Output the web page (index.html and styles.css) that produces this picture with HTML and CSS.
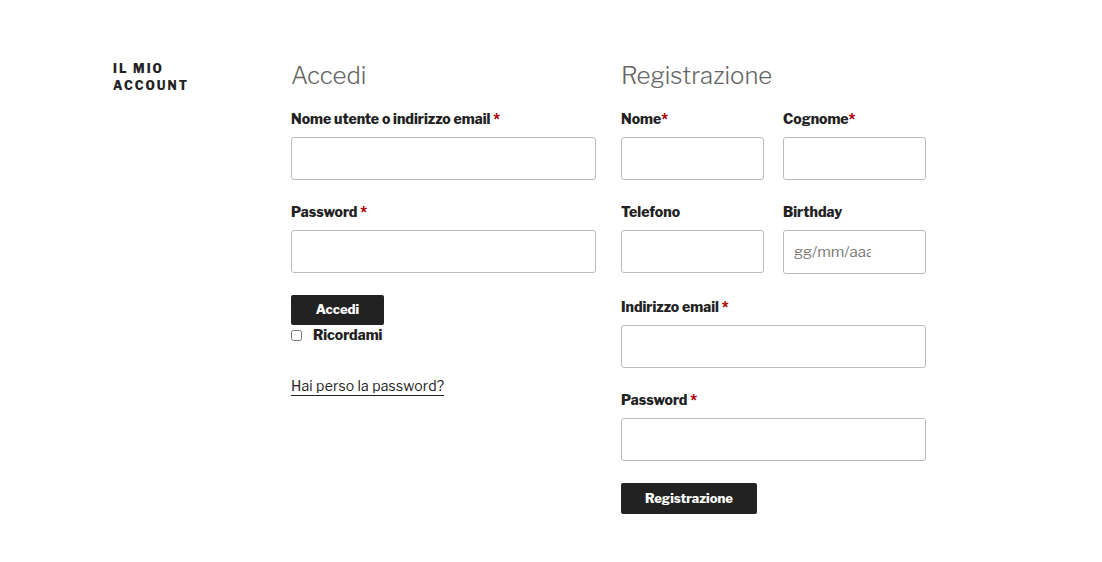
FILE: index.html
```html
<!DOCTYPE html>
<html lang="it">
<head>
<meta charset="utf-8">
<title>Il mio account</title>
<link rel="stylesheet" href="styles.css">
</head>
<body>
<div class="page">
  <header class="page-header">
    <h1 class="page-title">Il mio account</h1>
  </header>
  <div class="columns">
    <section class="col">
      <h2 class="col-title">Accedi</h2>
      <form class="form">
        <div class="row">
          <label>Nome utente o indirizzo email <span class="req">*</span></label>
          <input type="text" class="field">
        </div>
        <div class="row">
          <label>Password <span class="req">*</span></label>
          <input type="password" class="field">
        </div>
        <div class="actions">
          <button type="button" class="btn btn-login">Accedi</button>
          <label class="remember"><input type="checkbox" class="check"> <span>Ricordami</span></label>
        </div>
        <p class="lost"><a href="#">Hai perso la password?</a></p>
      </form>
    </section>
    <section class="col">
      <h2 class="col-title">Registrazione</h2>
      <form class="form">
        <div class="pair">
          <div class="row">
            <label>Nome<span class="req">*</span></label>
            <input type="text" class="field">
          </div>
          <div class="row">
            <label>Cognome<span class="req">*</span></label>
            <input type="text" class="field">
          </div>
        </div>
        <div class="pair pair-tall">
          <div class="row">
            <label>Telefono</label>
            <input type="text" class="field">
          </div>
          <div class="row">
            <label>Birthday</label>
            <input type="text" class="field date" placeholder="gg/mm/aaaa">
          </div>
        </div>
        <div class="row">
          <label>Indirizzo email <span class="req">*</span></label>
          <input type="email" class="field">
        </div>
        <div class="row">
          <label>Password <span class="req">*</span></label>
          <input type="password" class="field">
        </div>
        <div class="actions">
          <button type="button" class="btn btn-register">Registrazione</button>
        </div>
      </form>
    </section>
  </div>
</div>
</body>
</html>
```
FILE: styles.css
```css
* { box-sizing: border-box; }

html, body {
  margin: 0;
  padding: 0;
  background: #fff;
}

body {
  font-family: "Libre Franklin", "Open Sans", "Liberation Sans", sans-serif;
  color: #333;
  font-size: 14px;
}

.page {
  display: flex;
  padding: 60px 0 0 113px;
}

.page-header {
  width: 178px;
  flex: none;
}

.page-title {
  margin: 0;
  font-size: 12px;
  line-height: 17px;
  font-weight: 800;
  letter-spacing: 0.17em;
  text-transform: uppercase;
  color: #222;
  width: 100px;
}

.columns {
  display: flex;
  gap: 25px;
}

.col {
  width: 305px;
}

.col-title {
  margin: 0;
  font-size: 24px;
  font-weight: 300;
  line-height: 32px;
  color: #666;
}

.form {
  margin-top: 17px;
}

.row {
  margin-bottom: 22px;
}

.row label {
  display: block;
  font-weight: 800;
  font-size: 14px;
  line-height: 20px;
  margin-bottom: 8px;
  color: #222;
}

.req {
  color: #a00;
}

.field {
  display: block;
  width: 100%;
  height: 43px;
  border: 1px solid #bbb;
  border-radius: 3px;
  background: #fff;
  font: inherit;
  font-size: 15px;
  padding: 0 10px;
  color: #333;
}

.field.date {
  height: 44px;
  padding-right: 54px;
}

.field.date::placeholder {
  color: #777;
}

.pair {
  display: grid;
  grid-template-columns: 143px 143px;
  column-gap: 19px;
}

.pair-tall .row {
  margin-bottom: 23px;
}

.btn {
  display: block;
  border: 0;
  border-radius: 2px;
  background: #222;
  color: #fff;
  font: inherit;
  font-weight: 800;
  font-size: 13px;
  padding: 0 0 2px;
  cursor: pointer;
}

.btn-login {
  width: 93px;
  height: 30px;
}

.btn-register {
  width: 136px;
  height: 31px;
}

.remember {
  display: flex;
  align-items: center;
  gap: 11px;
  margin-top: 0;
  font-weight: 800;
  font-size: 14px;
  line-height: 20px;
  color: #222;
}

.check {
  margin: 0;
  width: 11px;
  height: 11px;
}

.lost {
  margin: 31px 0 0;
  line-height: 20px;
}

.lost a {
  color: #222;
  text-decoration: none;
  letter-spacing: 0.2px;
  border-bottom: 1px solid #222;
  padding-bottom: 1px;
}
```
